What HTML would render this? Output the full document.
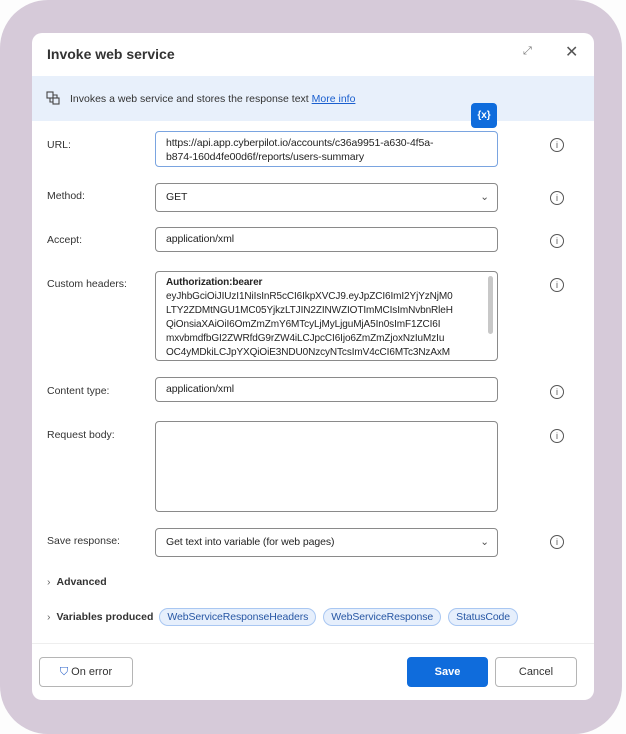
<!DOCTYPE html>
<html><head><meta charset="utf-8"><style>
*{box-sizing:border-box;margin:0;padding:0}
body{width:626px;height:734px;background:#fdfdfd;position:relative;overflow:hidden;font-family:"Liberation Sans",sans-serif;color:#242424;font-size:11px}
.frame{position:absolute;left:0;top:0;width:622px;height:734px;background:#d6cad9;border-radius:48px}
.dlg{position:absolute;left:32px;top:33px;width:562px;height:667px;background:#fff;border-radius:10px;overflow:hidden}
.a{position:absolute}
.lbl{position:absolute;left:15px;font-size:10.5px;color:#333}
.fld{position:absolute;left:123px;width:343px;border:1px solid #8a8a8a;border-radius:4px;background:#fff;padding:0 10px;font-size:10.5px;color:#242424;letter-spacing:-0.1px}
.info{position:absolute;left:518px;width:14px;height:14px;border:1px solid #555;border-radius:50%;font-size:9px;line-height:12px;text-align:center;color:#555}
.chip{display:inline-block;border:1px solid #a9c7f2;background:#e6effc;color:#2857a4;border-radius:9px;padding:2px 7px;font-size:10.5px;margin-right:7px;letter-spacing:-0.1px}
.btn{position:absolute;top:624px;height:30px;border:1px solid #b5b5b5;border-radius:4px;font-size:11px;font-weight:bold;text-align:center;line-height:28px;color:#333}
</style></head><body>
<div class="frame"></div>
<div class="dlg">
<div class="a" style="left:15px;top:13px;font-size:14px;font-weight:bold;color:#333">Invoke web service</div>
<div class="a" style="left:491px;top:12px;font-size:11px;color:#777">⤢</div>
<div class="a" style="left:533px;top:9px;font-size:16px;color:#555">✕</div>
<div class="a" style="left:0;top:43px;width:562px;height:45px;background:#e8f0fb"></div>
<svg class="a" style="left:14px;top:58px" width="15" height="15" viewBox="0 0 15 15" fill="none" stroke="#444" stroke-width="1.1"><rect x="1" y="1" width="6" height="6"/><rect x="7" y="7" width="6" height="6"/><path d="M4 7v4h3M7 4h4v3"/></svg>
<div class="a" style="left:38px;top:60px;font-size:10.5px;color:#333">Invokes a web service and stores the response text <span style="color:#1a5fcf;text-decoration:underline">More info</span></div>
<div class="a" style="left:439px;top:70px;width:26px;height:25px;background:#0f6cdc;border-radius:4px;color:#fff;font-size:10px;text-align:center;line-height:25px;font-weight:bold">{x}</div>

<div class="lbl" style="top:106px">URL:</div>
<div class="fld" style="top:98px;height:36px;border:1.5px solid #7aa4e0;padding-top:4px;line-height:14px">https://api.app.cyberpilot.io/accounts/c36a9951-a630-4f5a-<br>b874-160d4fe00d6f/reports/users-summary</div>
<div class="info" style="top:105px">i</div>

<div class="lbl" style="top:157px">Method:</div>
<div class="fld" style="top:150px;height:29px;line-height:27px">GET<span style="position:absolute;right:8px;top:0;color:#555">⌄</span></div>
<div class="info" style="top:158px">i</div>

<div class="lbl" style="top:201px">Accept:</div>
<div class="fld" style="top:194px;height:25px;line-height:23px">application/xml</div>
<div class="info" style="top:201px">i</div>

<div class="lbl" style="top:245px">Custom headers:</div>
<div class="fld" style="top:238px;height:90px;overflow:hidden;padding-top:4px;line-height:14px;font-size:10px;letter-spacing:-0.1px;white-space:nowrap"><b>Authorization:bearer</b><br>eyJhbGciOiJIUzI1NiIsInR5cCI6IkpXVCJ9.eyJpZCI6ImI2YjYzNjM0<br>LTY2ZDMtNGU1MC05YjkzLTJIN2ZINWZIOTImMCIsImNvbnRleH<br>QiOnsiaXAiOiI6OmZmZmY6MTcyLjMyLjguMjA5In0sImF1ZCI6I<br>mxvbmdfbGI2ZWRfdG9rZW4iLCJpcCI6Ijo6ZmZmZjoxNzIuMzIu<br>OC4yMDkiLCJpYXQiOiE3NDU0NzcyNTcsImV4cCI6MTc3NzAxM<span style="position:absolute;right:4px;top:4px;width:5px;height:58px;background:#c8c8c8;border-radius:3px"></span></div>
<div class="info" style="top:245px">i</div>

<div class="lbl" style="top:352px">Content type:</div>
<div class="fld" style="top:344px;height:25px;line-height:23px">application/xml</div>
<div class="info" style="top:352px">i</div>

<div class="lbl" style="top:396px">Request body:</div>
<div class="fld" style="top:388px;height:91px"></div>
<div class="info" style="top:396px">i</div>

<div class="lbl" style="top:502px">Save response:</div>
<div class="fld" style="top:495px;height:29px;line-height:27px">Get text into variable (for web pages)<span style="position:absolute;right:8px;top:0;color:#555">⌄</span></div>
<div class="info" style="top:502px">i</div>

<div class="a" style="left:15px;top:543px;font-size:10.5px;color:#333"><span style="color:#666;margin-right:6px">›</span><b>Advanced</b></div>
<div class="a" style="left:15px;top:575px;font-size:10.5px;color:#333;white-space:nowrap"><span style="color:#666;margin-right:6px">›</span><b style="margin-right:6px">Variables produced</b><span class="chip">WebServiceResponseHeaders</span><span class="chip">WebServiceResponse</span><span class="chip">StatusCode</span></div>
<div class="a" style="left:0;top:610px;width:562px;height:1px;background:#eee"></div>

<div class="btn" style="left:7px;width:94px;font-weight:normal"><span style="color:#2a62c9">⛉</span> On error</div>
<div class="btn" style="left:375px;width:81px;background:#0f6cdc;border-color:#0f6cdc;color:#fff">Save</div>
<div class="btn" style="left:463px;width:82px;font-weight:normal">Cancel</div>
</div>
</body></html>
